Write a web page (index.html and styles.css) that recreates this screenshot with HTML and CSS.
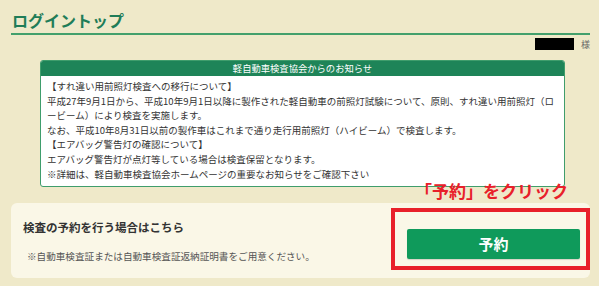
FILE: index.html
```html
<!DOCTYPE html>
<html lang="ja">
<head>
<meta charset="UTF-8">
<meta name="viewport" content="width=device-width, initial-scale=1.0">
<title>ログイントップ</title>
<link rel="stylesheet" href="styles.css">
</head>
<body>

<div class="page">
  <h1 class="page-title">ログイントップ</h1>

  <div class="user-line">
    <span class="user-name"></span>
    <span class="user-suffix">様</span>
  </div>

  <div class="notice">
    <div class="notice-head">軽自動車検査協会からのお知らせ</div>
    <div class="notice-body">
      <p>【すれ違い用前照灯検査への移行について】</p>
      <p>平成27年9月1日から、平成10年9月1日以降に製作された軽自動車の前照灯試験について、原則、すれ違い用前照灯（ロービーム）により検査を実施します。</p>
      <p>なお、平成10年8月31日以前の製作車はこれまで通り走行用前照灯（ハイビーム）で検査します。</p>
      <p>【エアバッグ警告灯の確認について】</p>
      <p>エアバッグ警告灯が点灯等している場合は検査保留となります。</p>
      <p>※詳細は、軽自動車検査協会ホームページの重要なお知らせをご確認下さい</p>
    </div>
  </div>

  <div class="reserve">
    <div class="reserve-text">
      <h2>検査の予約を行う場合はこちら</h2>
      <p>※自動車検査証または自動車検査証返納証明書をご用意ください。</p>
    </div>
    <div class="reserve-action">
      <button class="btn-reserve">予約</button>
    </div>
    <!-- annotation drawn over the screenshot -->
    <div class="mark-label">「予約」をクリック</div>
    <div class="mark-box"></div>
  </div>
</div>

</body>
</html>
```

FILE: styles.css
```css
body {
  margin: 0;
  background-color: #efe9c9;
  font-family: "Noto Sans CJK JP", "Noto Sans", sans-serif;
  color: #333;
}

.page {
  padding: 8px 9px 0 11px;
}

.page-title {
  margin: 0;
  padding: 0 0 1px 1px;
  font-size: 16px;
  line-height: 24px;
  color: #1f7d58;
  border-bottom: 2px solid #43a06c;
}

.user-line {
  display: flex;
  justify-content: flex-end;
  align-items: center;
  height: 16px;
  margin-top: 1px;
}
.user-name {
  display: inline-block;
  width: 39px;
  height: 12px;
  background: #000;
}
.user-suffix {
  font-size: 9px;
  color: #666;
  margin-left: 7px;
}

.notice {
  margin: 8px 0 0 29px;
  width: 523px;
  background: #fff;
  border: 1px solid #3f9d6c;
  border-radius: 3px;
}
.notice-head {
  background: #1e8458;
  color: #fff;
  text-align: center;
  font-size: 9.3px;
  line-height: 15px;
  border-radius: 2px 2px 0 0;
}
.notice-body {
  padding: 3px 6px 5px 6px;
}
.notice-body p {
  margin: 0;
  font-size: 9.5px;
  line-height: 14.6px;
  color: #333;
}

.reserve {
  position: relative;
  display: flex;
  justify-content: space-between;
  align-items: center;
  margin-top: 16px;
  height: 75px;
  background: #faf7e7;
  border-radius: 6px;
}
.reserve-text {
  padding-left: 12px;
}
.reserve-text h2 {
  margin: 0 0 14px;
  font-size: 11.5px;
  line-height: 16px;
  color: #333;
}
.reserve-text p {
  margin: 0 0 0 4px;
  font-size: 9.6px;
  line-height: 14px;
  color: #555;
}

.reserve-action {
  padding: 6px 10px 0 0;
}
.btn-reserve {
  width: 173px;
  height: 30px;
  border: none;
  border-radius: 2px;
  background: #0f9a5b;
  color: #fff;
  font-family: inherit;
  font-size: 15px;
  font-weight: bold;
  box-shadow: 0 1px 1px rgba(0, 0, 0, 0.15);
}

.mark-label {
  position: absolute;
  right: 22px;
  top: -23px;
  color: #e8202a;
  font-size: 17px;
  font-weight: bold;
  line-height: 22px;
  white-space: nowrap;
}
.mark-box {
  position: absolute;
  right: 0;
  top: 5px;
  width: 191px;
  height: 54px;
  border: 4px solid #e8202a;
}
```
